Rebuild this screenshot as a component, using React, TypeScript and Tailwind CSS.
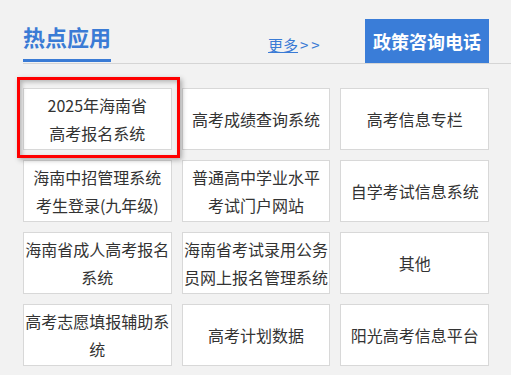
import React from 'react';

const ITEMS: string[][] = [
  ['2025年海南省', '高考报名系统'],
  ['高考成绩查询系统'],
  ['高考信息专栏'],
  ['海南中招管理系统', '考生登录(九年级)'],
  ['普通高中学业水平', '考试门户网站'],
  ['自学考试信息系统'],
  ['海南省成人高考报名系统'],
  ['海南省考试录用公务员网上报名管理系统'],
  ['其他'],
  ['高考志愿填报辅助系统'],
  ['高考计划数据'],
  ['阳光高考信息平台'],
];

export default function App() {
  return (
    <div
      className="relative min-h-[375px] w-[511px] bg-[#f2f2f2] pl-[23px]"
      style={{ fontFamily: '"Microsoft YaHei", "Noto Sans CJK SC", sans-serif' }}
    >
      {/* header */}
      <div className="flex h-[64px] items-end border-b border-[#d5d5d5]">
        <div className="mb-[1px] border-b-[3px] border-[#3a7bd5] pb-[8px] text-[22px] font-bold leading-[30px] text-[#3a7bd5]">
          热点应用
        </div>
        <a className="mb-[8px] ml-[157px] text-[15px] leading-[20px] text-[#3a7bd5]">
          <span className="underline underline-offset-1">更多</span>
          <span className="ml-[2px] tracking-[3px]">&gt;&gt;</span>
        </a>
        <div className="ml-auto mr-[22px] flex h-[44px] w-[124px] items-center justify-center bg-[#3a7dd8] text-[18px] font-bold text-white">
          政策咨询电话
        </div>
      </div>

      {/* grid */}
      <div className="mt-[24px] grid w-[466px] grid-cols-3 gap-[10px]">
        {ITEMS.map((lines, i) => (
          <div
            key={i}
            className="flex h-[62px] flex-col items-center justify-center border border-[#d8d8d8] bg-white text-center text-[16px] leading-[28px] text-[#333]"
          >
            {lines.map((l, j) => (
              <span key={j}>{l}</span>
            ))}
          </div>
        ))}
      </div>

      {/* highlight on first item */}
      <div className="pointer-events-none absolute left-[17px] top-[77px] h-[81px] w-[163px] border-[3px] border-[#ff0000] shadow-[2px_2px_5px_rgba(0,0,0,0.3),inset_2px_2px_4px_rgba(0,0,0,0.25)]" />
    </div>
  );
}
